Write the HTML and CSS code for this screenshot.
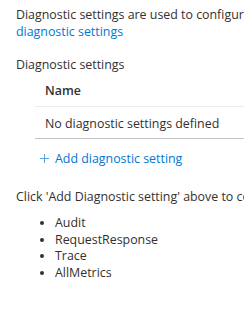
FILE: index.html
```html
<!DOCTYPE html>
<html lang="en">
<head>
    <meta charset="UTF-8">
    <meta name="viewport" content="width=device-width, initial-scale=1.0">
    <title>Diagnostic settings</title>
    <link rel="stylesheet" href="styles.css">
</head>
<body>
    <div class="page">
        <p class="intro">
            Diagnostic settings are used to configure streaming export of platform logs and metrics for a resource to the destination of your choice. You may create up to five different diagnostic settings to send different logs and metrics to independent destinations. Learn more about<br>
            <a href="#" class="link">diagnostic settings</a>
        </p>

        <h2 class="section-title">Diagnostic settings</h2>

        <div class="grid">
            <div class="grid-header">Name</div>
            <div class="grid-row">No diagnostic settings defined</div>
        </div>

        <a href="#" class="add-button">
            <span class="add-icon">
                <svg width="9" height="9" viewBox="0 0 9 9">
                    <path d="M4.5 0v9M0 4.5h9" stroke="#5ea2e3" stroke-width="1" fill="none"/>
                </svg>
            </span>
            Add diagnostic setting
        </a>

        <p class="hint">Click 'Add Diagnostic setting' above to configure the collection of the following data:</p>
        <ul class="data-list">
            <li>Audit</li>
            <li>RequestResponse</li>
            <li>Trace</li>
            <li>AllMetrics</li>
        </ul>
    </div>
</body>
</html>
```

FILE: styles.css
```css
html, body {
    margin: 0;
    padding: 0;
    overflow: hidden;
    background-color: #fff;
}
body {
    font-family: "Open Sans", "Noto Sans", sans-serif;
    font-size: 12.4px;
    line-height: 17px;
    color: #323130;
}
.page {
    width: 1400px;
    padding: 6px 16px 0 16px;
}
.intro {
    margin: 0;
    white-space: nowrap;
}
.link {
    color: #0078d4;
    text-decoration: none;
}
.section-title {
    margin: 16px 0 0 0;
    font-size: 12.4px;
    font-weight: normal;
}
.grid {
    margin-left: 19px;
}
.grid-header {
    padding: 9px 10px 7px 10px;
    font-weight: 600;
    border-bottom: 1px solid #edebe9;
}
.grid-row {
    padding: 8px 10px 6px 10px;
    border-bottom: 1px solid #c8c6c4;
}
.add-button {
    display: flex;
    align-items: center;
    gap: 6px;
    margin: 11px 0 0 24px;
    color: #0078d4;
    text-decoration: none;
}
.add-icon {
    display: flex;
}
.hint {
    margin: 21px 0 0 0;
    white-space: nowrap;
}
.data-list {
    margin: 10px 0 0 0;
    padding-left: 39px;
    line-height: 16.7px;
}
```
